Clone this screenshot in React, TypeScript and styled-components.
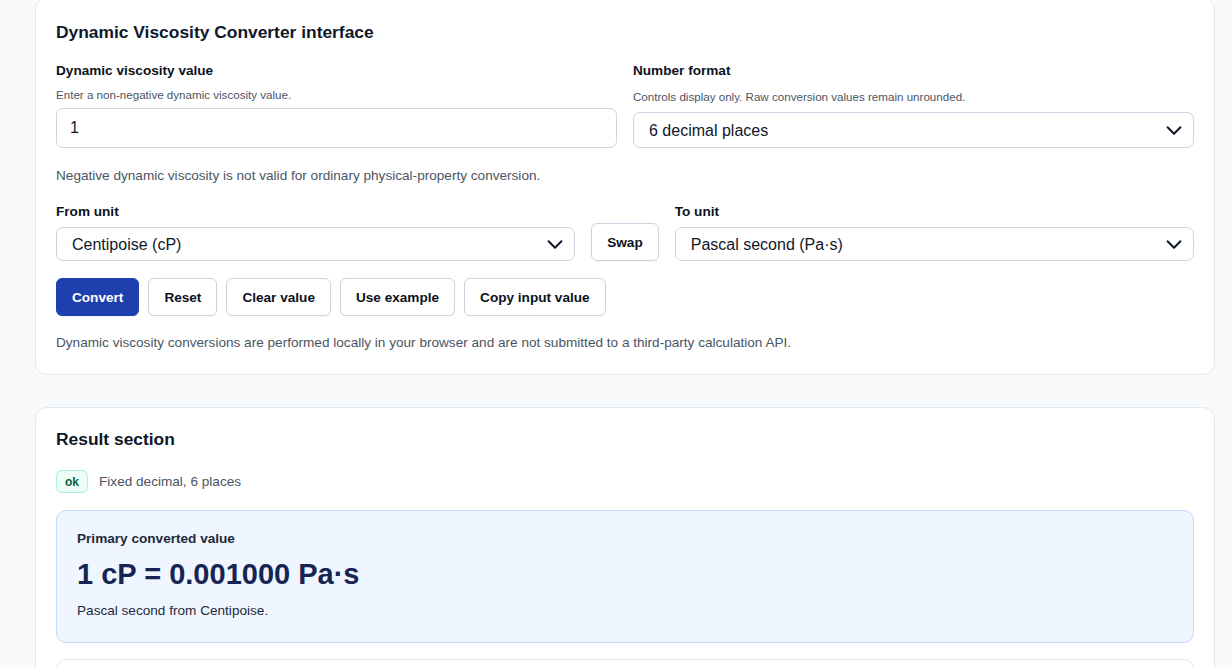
import React, { useState } from 'react';
import styled, { createGlobalStyle } from 'styled-components';

const GlobalStyle = createGlobalStyle`
  body {
    margin: 0;
    background: #f8fafc;
    font-family: "Liberation Sans", Arial, sans-serif;
    color: #111827;
  }
`

const Page = styled.main`
  display: flex;
  flex-direction: column;
  gap: 32px;
  padding: 0 17px 40px 35px;
  margin-top: -3px;
`

const Card = styled.section<{ $pt: number }>`
  background: #ffffff;
  border: 1px solid #e2e8f0;
  border-radius: 12px;
  padding: ${({ $pt }) => $pt}px 20px 21px;
`

const Title = styled.h2<{ $mb: number }>`
  margin: 0 0 ${({ $mb }) => $mb}px;
  font-size: 17.4px;
  line-height: 24px;
  font-weight: 700;
  color: #0f172a;
`

const TwoCols = styled.div`
  display: grid;
  grid-template-columns: 1fr 1fr;
  gap: 16px;
`

const Field = styled.div`
  display: flex;
  flex-direction: column;
`

const Label = styled.label`
  font-size: 13.6px;
  line-height: 20px;
  font-weight: 700;
  color: #0b1220;
`

const Hint = styled.span<{ $above: number; $below: number }>`
  margin: ${({ $above }) => $above}px 0 ${({ $below }) => $below}px;
  font-size: 11.6px;
  line-height: 16px;
  color: #4b5563;
`

const TextInput = styled.input`
  box-sizing: border-box;
  height: 40px;
  width: 100%;
  padding: 0 13px;
  border: 1px solid #cbd5e1;
  border-radius: 7px;
  font-family: inherit;
  font-size: 16px;
  color: #111827;
  background: #fff;
  outline: none;
`

const SelectWrap = styled.div<{ $top?: number }>`
  position: relative;
  width: 100%;
  margin-top: ${({ $top }) => $top ?? 0}px;
`

const Select = styled.select<{ $height: number }>`
  box-sizing: border-box;
  width: 100%;
  height: ${({ $height }) => $height}px;
  padding: 0 40px 0 15px;
  border: 1px solid #cbd5e1;
  border-radius: 7px;
  background: #fff;
  font-family: inherit;
  font-size: 16px;
  color: #111827;
  appearance: none;
  outline: none;
`

const Chevron = styled.svg`
  position: absolute;
  right: 9px;
  top: 50%;
  transform: translateY(-50%);
  pointer-events: none;
`

const Note = styled.p<{ $top: number }>`
  margin: ${({ $top }) => $top}px 0 0;
  font-size: 13.6px;
  line-height: 20px;
  color: #4b5563;
`

const UnitRow = styled.div`
  display: grid;
  grid-template-columns: 1fr auto 1fr;
  gap: 16px;
  align-items: end;
  margin-top: 16px;
`

const Actions = styled.div`
  display: flex;
  gap: 9px;
  margin-top: 17px;
`

const Button = styled.button<{ $primary?: boolean }>`
  height: 38px;
  padding: 0 15px;
  border-radius: 6px;
  border: 1px solid ${({ $primary }) => ($primary ? '#1e40af' : '#cbd5e1')};
  background: ${({ $primary }) => ($primary ? '#1e40af' : '#ffffff')};
  color: ${({ $primary }) => ($primary ? '#ffffff' : '#0b1220')};
  font-family: inherit;
  font-size: 13.6px;
  font-weight: 700;
  cursor: pointer;
  box-shadow: 0 1px 1px rgba(15, 23, 42, 0.04);
`

const StatusRow = styled.div`
  display: flex;
  align-items: center;
  gap: 11px;
  margin-top: 19px;
`

const Badge = styled.span`
  display: inline-flex;
  align-items: center;
  height: 23px;
  box-sizing: border-box;
  padding: 0 8px;
  border: 1px solid #a7f3d0;
  border-radius: 6px;
  background: #ecfdf5;
  color: #065f46;
  font-size: 12px;
  font-weight: 700;
`

const StatusText = styled.span`
  font-size: 13.6px;
  color: #4b5563;
`

const ResultBox = styled.div`
  margin-top: 17px;
  padding: 19px 20px 21px;
  border: 1px solid #bfdbfe;
  border-radius: 10px;
  background: #eff6ff;
`

const ResultLabel = styled.div`
  font-size: 13.6px;
  line-height: 18px;
  font-weight: 700;
  color: #1e293b;
`

const ResultValue = styled.div`
  margin-top: 9px;
  font-size: 29px;
  line-height: 34px;
  font-weight: 700;
  color: #172554;
`

const ResultSub = styled.div`
  margin-top: 10px;
  font-size: 13.6px;
  line-height: 20px;
  color: #1e293b;
`

const NextBox = styled.div`
  margin-top: 16px;
  height: 80px;
  border: 1px solid #e2e8f0;
  border-radius: 10px;
  background: #fff;
`

const ChevronIcon = () => (
  <Chevron width="22" height="22" viewBox="0 0 24 24" fill="none" stroke="#111827" strokeWidth="2.2" strokeLinecap="round" strokeLinejoin="round">
    <path d="M5 9l7 7 7-7" />
  </Chevron>
)

const units = [
  { value: 'cP', label: 'Centipoise (cP)' },
  { value: 'Pa·s', label: 'Pascal second (Pa·s)' },
]

const App = () => {
  const [value, setValue] = useState('1');
  const [from, setFrom] = useState('cP');
  const [to, setTo] = useState('Pa·s');

  return (
    <>
      <GlobalStyle />
      <Page>
        <Card $pt={22}>
          <Title $mb={17}>Dynamic Viscosity Converter interface</Title>
          <TwoCols>
            <Field>
              <Label>Dynamic viscosity value</Label>
              <Hint $above={6} $below={5}>Enter a non-negative dynamic viscosity value.</Hint>
              <TextInput value={value} onChange={(e) => setValue(e.target.value)} />
            </Field>
            <Field>
              <Label>Number format</Label>
              <Hint $above={8} $below={7}>Controls display only. Raw conversion values remain unrounded.</Hint>
              <SelectWrap>
                <Select $height={36} defaultValue="6">
                  <option value="6">6 decimal places</option>
                </Select>
                <ChevronIcon />
              </SelectWrap>
            </Field>
          </TwoCols>
          <Note $top={18}>Negative dynamic viscosity is not valid for ordinary physical-property conversion.</Note>
          <UnitRow>
            <Field>
              <Label>From unit</Label>
              <SelectWrap $top={5}>
                <Select $height={34} value={from} onChange={(e) => setFrom(e.target.value)}>
                  {units.map((u) => <option key={u.value} value={u.value}>{u.label}</option>)}
                </Select>
                <ChevronIcon />
              </SelectWrap>
            </Field>
            <Button onClick={() => { setFrom(to); setTo(from); }}>Swap</Button>
            <Field>
              <Label>To unit</Label>
              <SelectWrap $top={5}>
                <Select $height={34} value={to} onChange={(e) => setTo(e.target.value)}>
                  {units.map((u) => <option key={u.value} value={u.value}>{u.label}</option>)}
                </Select>
                <ChevronIcon />
              </SelectWrap>
            </Field>
          </UnitRow>
          <Actions>
            <Button $primary>Convert</Button>
            <Button>Reset</Button>
            <Button>Clear value</Button>
            <Button>Use example</Button>
            <Button>Copy input value</Button>
          </Actions>
          <Note $top={17}>Dynamic viscosity conversions are performed locally in your browser and are not submitted to a third-party calculation API.</Note>
        </Card>
        <Card $pt={19}>
          <Title $mb={0}>Result section</Title>
          <StatusRow>
            <Badge>ok</Badge>
            <StatusText>Fixed decimal, 6 places</StatusText>
          </StatusRow>
          <ResultBox>
            <ResultLabel>Primary converted value</ResultLabel>
            <ResultValue>1 cP = 0.001000 Pa·s</ResultValue>
            <ResultSub>Pascal second from Centipoise.</ResultSub>
          </ResultBox>
          <NextBox />
        </Card>
      </Page>
    </>
  )
}

export default App;
